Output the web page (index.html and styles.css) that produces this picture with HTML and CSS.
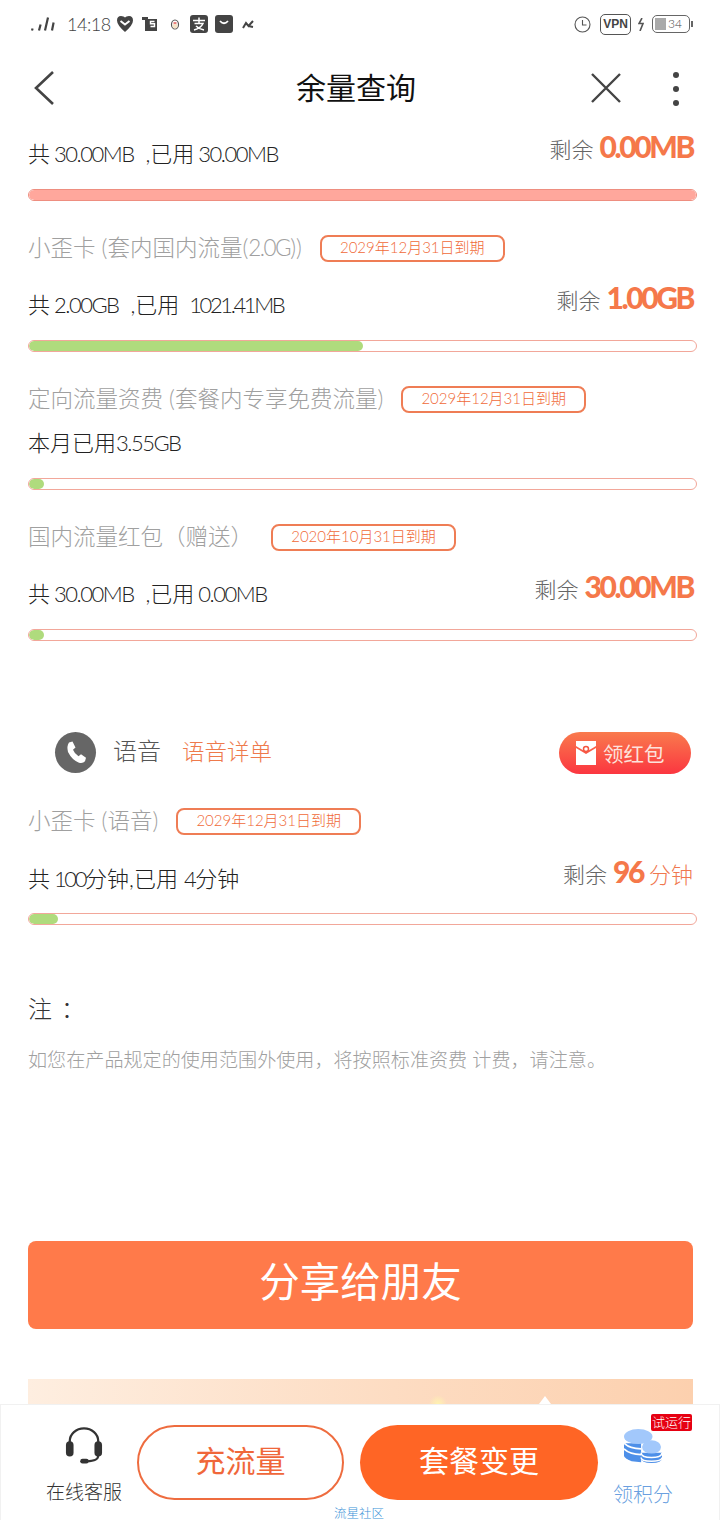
FILE: index.html
```html
<!DOCTYPE html>
<html lang="zh-CN">
<head>
<meta charset="utf-8">
<title>余量查询</title>
<link rel="stylesheet" href="styles.css">
</head>
<body>
<div class="page">
  <header class="status">
    <div class="status-left">
      <svg class="sig" width="26" height="18" viewBox="0 0 26 18"><path d="M2 15.5l.6-2M9 15.5l1.6-6M15 15.5l3-13M22 15.5l1.6-8" fill="none" stroke="#444" stroke-width="2.2"/></svg>
      <span class="clock">14:18</span>
      <svg width="18" height="18" viewBox="0 0 18 18"><path d="M1 5.5Q1 1 5 1q3 0 4 1.500Q10 1 13 1q4 0 4 4.500Q17 10 9 17 1 10 1 5.500z" fill="#444"/><path d="M4.500 6L9 9.500 13.500 6" fill="none" stroke="#fff" stroke-width="2"/></svg>
      <svg width="18" height="18" viewBox="0 0 18 18"><path d="M1 2h6v3H6v9h10v2H4V5H1z" fill="#444"/><rect x="6" y="4" width="10" height="10" fill="#444"/><path d="M13.500 6.500h-4v2.300h4v2.700h-4" fill="none" stroke="#fff" stroke-width="1.400"/></svg>
      <svg class="penguin" width="10" height="12" viewBox="0 0 10 12"><ellipse cx="5" cy="6.500" rx="3.500" ry="4.500" fill="none" stroke="#555" stroke-width="1.200"/><ellipse cx="5" cy="8" rx="2.500" ry="2.500" fill="#f6e3c8"/><path d="M3.500 5h3" stroke="#d33" stroke-width="1.200"/></svg>
      <svg width="18" height="18" viewBox="0 0 18 18"><rect width="18" height="18" rx="3" fill="#444"/><path d="M3 5.500h12M9 2.500v5.500M4.500 8.500h8.500Q11 13 4 15M6 11q3 3 8 4" fill="none" stroke="#fff" stroke-width="1.500"/></svg>
      <svg width="18" height="18" viewBox="0 0 18 18"><rect width="18" height="18" rx="3" fill="#444"/><path d="M5 6q4 4.500 8 0" fill="none" stroke="#fff" stroke-width="1.800"/></svg>
      <svg class="nfc" width="12" height="9" viewBox="0 0 12 9"><path d="M1 8l3-5 2.500 3L11 1M6.500 6L11 7" fill="none" stroke="#444" stroke-width="2"/></svg>
    </div>
    <div class="status-right">
      <svg class="alarm" width="17" height="17" viewBox="0 0 17 17"><circle cx="8.500" cy="8.500" r="7.500" fill="none" stroke="#555" stroke-width="1.100"/><path d="M8.500 4v5h4" fill="none" stroke="#555" stroke-width="1.100"/></svg>
      <span class="vpn">VPN</span>
      <svg class="bolt" width="6" height="13" viewBox="0 0 6 13"><path d="M4 0L1 5.500h4L2 13" fill="none" stroke="#555" stroke-width="1.600"/></svg>
      <div class="battery"><span class="battery-level"></span><span class="battery-num">34</span></div>
    </div>
  </header>

  <nav class="nav">
    <svg class="back" width="22" height="36" viewBox="0 0 22 36"><path d="M20 2L3 18l17 16" fill="none" stroke="#444" stroke-width="2.600"/></svg>
    <h1 class="nav-title">余量查询</h1>
    <svg class="close" width="30" height="30" viewBox="0 0 30 30"><path d="M1 1l28 28M29 1L1 29" fill="none" stroke="#444" stroke-width="2.400"/></svg>
    <div class="more"><i></i><i></i><i></i></div>
  </nav>

  <main class="content">
    <div class="usage first">
      <div class="used">共 <span class="num val">30.00MB</span> ,已用 <span class="num val">30.00MB</span></div>
      <div class="remain">剩余 <b>0.00MB</b></div>
    </div>
    <div class="bar bar-full gap-17"><span class="fill" style="width:100%"></span></div>

    <div class="head gap-32"><span class="head-name">小歪卡 (套内国内流量(<span class="num">2.0G</span>))</span><span class="tag">2029年12月31日到期</span></div>
    <div class="usage gap-16">
      <div class="used">共 <span class="num val">2.00GB</span> ,已用 <span class="num long">1021.41MB</span></div>
      <div class="remain">剩余 <b>1.00GB</b></div>
    </div>
    <div class="bar gap-17"><span class="fill" style="width:50.100%"></span></div>

    <div class="head gap-32"><span class="head-name">定向流量资费 (套餐内专享免费流量)</span><span class="tag">2029年12月31日到期</span></div>
    <div class="usage gap-6">
      <div class="used flat">本月已用<span class="num">3.55GB</span></div>
    </div>
    <div class="bar gap-14"><span class="fill" style="width:2.200%"></span></div>

    <div class="head gap-32"><span class="head-name">国内流量红包（赠送）</span><span class="tag">2020年10月31日到期</span></div>
    <div class="usage gap-16">
      <div class="used">共 <span class="num val">30.00MB</span> ,已用 <span class="num val">0.00MB</span></div>
      <div class="remain">剩余 <b>30.00MB</b></div>
    </div>
    <div class="bar gap-17"><span class="fill" style="width:2.200%"></span></div>

    <section class="voice">
      <span class="voice-icon">
        <svg width="26" height="26" viewBox="0 0 26 26"><path d="M6 2.500l3.500-1 3 6-2.500 2.200q1.500 4 5.500 6.500l2.500-2 5 3.500-1 3.500q-2 2.500-6 1.500Q9 20 5 12 3.500 6 6 2.500z" fill="#fff"/></svg>
      </span>
      <span class="voice-name">语音</span>
      <span class="voice-link">语音详单</span>
      <span class="red-pack">
        <svg width="20" height="24" viewBox="0 0 20 24"><path d="M0 0h20v5L10 11 0 5z" fill="#fff"/><path d="M0 7l10 6 10-6v17H0z" fill="#fff"/><circle cx="10" cy="8" r="2.500" fill="#fff" stroke="#f4553f" stroke-width="1.500"/></svg>
        领红包
      </span>
    </section>

    <div class="head gap-32"><span class="head-name">小歪卡 (语音)</span><span class="tag">2029年12月31日到期</span></div>
    <div class="usage gap-17">
      <div class="used">共 <span class="num hundred">100</span>分钟,已用 <span class="num">4</span>分钟</div>
      <div class="remain minutes">剩余 <b>96</b> <em>分钟</em></div>
    </div>
    <div class="bar gap-16"><span class="fill" style="width:4.300%"></span></div>

    <h2 class="note-title">注：</h2>
    <p class="note">如您在产品规定的使用范围外使用，将按照标准资费 计费，请注意。</p>

    <button class="share">分享给朋友</button>
    <div class="banner"></div>
  </main>

  <footer class="dock">
    <div class="dock-item service">
      <svg width="38" height="40" viewBox="0 0 40 40"><path d="M5 20V15a15 13.500 0 0 1 30 0v5" fill="none" stroke="#333" stroke-width="2.400"/><rect x="1" y="15" width="8" height="16" rx="4" fill="#333"/><rect x="31" y="15" width="8" height="16" rx="4" fill="#333"/><path d="M35 30q0 6-12 6" fill="none" stroke="#333" stroke-width="2.200"/><rect x="16" y="33.500" width="9" height="5" rx="2.500" fill="#333"/></svg>
      <span>在线客服</span>
    </div>
    <button class="pill outline">充流量</button>
    <button class="pill solid">套餐变更</button>
    <div class="dock-item points">
      <svg width="38" height="38" viewBox="0 0 40 38"><path d="M0 16v13q0 3 8 6l10 1V16z" fill="#4d8fe8"/><path d="M0 22q6 6 18 6M0 16q6 6 18 6" fill="none" stroke="#fff" stroke-width="1.800"/><ellipse cx="15" cy="9" rx="15" ry="8" fill="#a2c8fb"/><path d="M18 26v6q0 5 11 5t11-5V26z" fill="#4d8fe8"/><path d="M18 26q0 5 11 5t11-5M18 31q0 4 11 4t11-4" fill="none" stroke="#fff" stroke-width="1.600"/><ellipse cx="29" cy="20" rx="10" ry="7" fill="#a2c8fb"/></svg>
      <span>领积分</span>
      <span class="trial">试运行</span>
    </div>
    <span class="forum">流星社区</span>
  </footer>
</div>
</body>
</html>
```
FILE: styles.css
```css
* { box-sizing: border-box; }

html, body { margin: 0; padding: 0; background: #fff; }

.page {
  position: relative;
  width: 720px;
  height: 1520px;
  overflow: hidden;
  display: flex;
  flex-direction: column;
  font-family: "Lato", "Noto Sans CJK SC", sans-serif;
  font-weight: 300;
  color: #333;
}

/* status bar */
.status {
  height: 48px;
  flex: none;
  display: flex;
  align-items: center;
  justify-content: space-between;
  padding: 0 30px;
}
.status-left, .status-right { display: flex; align-items: center; }
.status-left { gap: 7px; }
.clock { font-size: 18px; color: #444; margin: 0 -2px 0 4px; letter-spacing: -0.500px; }
.penguin { margin: 0 3px 0 4px; }
.nfc { margin-left: 2px; }
.alarm { margin-right: 9px; }
.vpn {
  width: 31px;
  height: 21px;
  border: 1.500px solid #555;
  border-radius: 5px;
  font: 700 12px/18px "Liberation Sans", sans-serif;
  text-align: center;
  color: #444;
}
.bolt { margin: 0 8px 0 7px; }
.battery {
  position: relative;
  width: 38px;
  height: 18px;
  border: 1px solid #666;
  border-radius: 5px;
  display: flex;
  align-items: center;
  padding: 2px;
}
.battery::after {
  content: "";
  position: absolute;
  right: -4px;
  top: 5px;
  width: 2px;
  height: 6px;
  background: #666;
}
.battery-level { width: 11px; height: 12px; background: #aaa; }
.battery-num { font-size: 12px; margin-left: 2px; color: #444; line-height: 1; }

/* navigation */
.nav {
  position: relative;
  height: 80px;
  flex: none;
  display: flex;
  align-items: center;
  justify-content: center;
}
.nav-title {
  margin: 0;
  font: 400 30px/1 "Noto Sans CJK SC", sans-serif;
  color: #111;
  transform: translate(-4px, -2px);
}
.back { position: absolute; left: 33px; top: 22px; }
.close { position: absolute; left: 591px; top: 25px; }
.more {
  position: absolute;
  left: 673px;
  top: 24px;
  display: flex;
  flex-direction: column;
  gap: 8px;
}
.more i { width: 6px; height: 6px; border-radius: 50%; background: #444; }

/* usage rows */
.content {
  flex: none;
  display: flex;
  flex-direction: column;
  padding: 0 23px 0 28px;
}
.usage {
  height: 44px;
  display: flex;
  align-items: center;
  justify-content: space-between;
  padding-right: 4px;
}
.used { font-size: 22px; color: #222; padding-top: 4px; white-space: nowrap; }
.used.flat { padding-top: 0; padding-bottom: 2px; }
.num { letter-spacing: -1.500px; }
.num.val { margin: 0 6px 0 -2px; }
.num.long { margin-left: 4px; letter-spacing: -2.400px; }
.num.hundred { margin-left: -2px; letter-spacing: -2.400px; }
.remain { font-size: 22px; color: #666; padding-bottom: 8px; white-space: nowrap; }
.remain b {
  font-size: 30px;
  font-weight: 900;
  letter-spacing: -2.400px;
  color: #f5784a;
}
.remain em { font-style: normal; color: #f0784f; }
.head { height: 30px; display: flex; align-items: center; gap: 18px; }
.head-name { font-size: 22.500px; line-height: 30px; color: #a0a0a0; white-space: nowrap; }
.tag {
  height: 27px;
  width: 185px;
  border: 2px solid #ef7d55;
  border-radius: 8px;
  font-size: 15px;
  line-height: 21px;
  text-align: center;
  color: #f06a38;
  white-space: nowrap;
}

.bar {
  height: 12px;
  flex: none;
  border: 1.500px solid #f2a79a;
  border-radius: 6px;
  overflow: hidden;
}
.fill { display: block; height: 100%; background: #afdb7d; border-radius: 5px; }
.bar-full { border-color: #ee8e80; }
.bar-full .fill { background: #ffa79c; }

.gap-6 { margin-top: 6px; }
.gap-14 { margin-top: 14px; }
.gap-16 { margin-top: 16px; }
.gap-17 { margin-top: 17px; }
.gap-32 { margin-top: 32px; }

/* voice header */
.voice {
  position: relative;
  height: 43px;
  margin-top: 90px;
  display: flex;
  align-items: center;
  padding-left: 27px;
}
.voice-icon {
  width: 41px;
  height: 41px;
  border-radius: 50%;
  background: #666;
  display: flex;
  align-items: center;
  justify-content: center;
}
.voice-name { font-size: 24px; color: #555; margin-left: 17px; padding-bottom: 6px; }
.voice-link { font-size: 22.500px; color: #ee7a4c; margin-left: 21px; padding-bottom: 6px; }
.red-pack {
  position: absolute;
  left: 531px;
  top: 1px;
  width: 132px;
  height: 42px;
  padding-left: 17px;
  border-radius: 21px;
  background: linear-gradient(#f97a4d, #fb3640);
  display: flex;
  align-items: center;
  gap: 7px;
  font-size: 20.500px;
  font-weight: 400;
  color: #fde2dc;
}

/* notes */
.note-title {
  margin: 63px 0 0;
  height: 40px;
  font-family: "Noto Sans CJK SC", sans-serif;
  font-size: 24px;
  font-weight: 300;
  line-height: 40px;
  letter-spacing: 9px;
  color: #333;
}
.note { margin: 17px 0 0; height: 30px; font-size: 19.100px; line-height: 30px; color: #a0a0a0; white-space: nowrap; }

.share {
  margin-top: 166px;
  height: 88px;
  width: 665px;
  padding: 0 0 9px;
  border: 0;
  border-radius: 8px;
  background: #ff7a4a;
  color: #fff;
  font: 400 40.500px/1 "Noto Sans CJK SC", sans-serif;
}
.banner {
  position: relative;
  margin-top: 50px;
  height: 25px;
  width: 665px;
  background:
    radial-gradient(circle at 410px 100%, #fff3b0 0, rgba(255, 243, 176, 0) 9px),
    linear-gradient(90deg, #feeee0, #fddcc2 55%, #fcd0ae);
}
.banner::after {
  content: "";
  position: absolute;
  left: 511px;
  bottom: 0;
  border: 6px solid transparent;
  border-top: 0;
  border-bottom: 8px solid #fff;
}

/* bottom dock */
.dock {
  position: relative;
  height: 116px;
  flex: none;
  border: 1px solid #f1f1f1;
  border-bottom: 0;
  background: #fff;
}
.dock-item { position: absolute; display: flex; flex-direction: column; align-items: center; }
.dock-item span { white-space: nowrap; }
.service { left: 44px; top: 21px; width: 78px; gap: 14px; font-size: 19px; color: #333; line-height: 24px; }
.points { left: 612px; top: 22px; width: 60px; gap: 17px; font-size: 20px; color: #6a9fe0; line-height: 24px; }
.trial {
  position: absolute;
  left: 38px;
  top: -13px;
  width: 41px;
  height: 17px;
  background: #e60012;
  color: #fff;
  border-radius: 2px;
  font-size: 13px;
  line-height: 17px;
  text-align: center;
}
.pill {
  position: absolute;
  top: 20px;
  height: 75px;
  padding: 0 0 7px;
  border-radius: 38px;
  font: 400 30px/1 "Noto Sans CJK SC", sans-serif;
}
.outline { left: 136px; width: 207px; background: #fff; border: 2px solid #ee6c3f; color: #f0673a; }
.solid { left: 359px; width: 238px; background: #ff6525; border: 0; color: #fff; }
.forum {
  position: absolute;
  left: 333px;
  top: 101px;
  font-size: 12.500px;
  line-height: 16px;
  color: #3d93d8;
}
```
